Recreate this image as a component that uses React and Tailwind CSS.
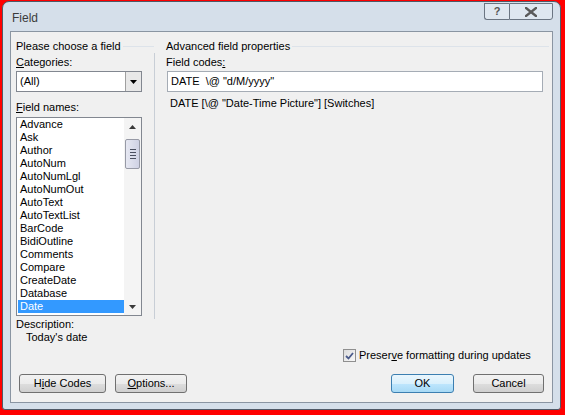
import React from "react";

const items = [
  "Advance", "Ask", "Author", "AutoNum", "AutoNumLgl", "AutoNumOut", "AutoText",
  "AutoTextList", "BarCode", "BidiOutline", "Comments", "Compare", "CreateDate",
  "Database", "Date",
];

function Btn({ children, className = "", primary = false }) {
  return (
    <div
      className={
        "h-[19px] rounded-[3px] border flex items-center justify-center text-[#000] " +
        (primary
          ? "border-[#3c7fb1] bg-[linear-gradient(#eaf6fd_0%,#d9f0fc_50%,#bee6fd_51%,#a7d9f5_100%)] "
          : "border-[#707070] bg-[linear-gradient(#f2f2f2_0%,#ebebeb_50%,#dddddd_51%,#cfcfcf_100%)] ") +
        className
      }
    >
      {children}
    </div>
  );
}

export default function App() {
  return (
    <div className="w-[565px] h-[415px] bg-[#ff0000] pt-px pl-[2px] pr-[4px] pb-[5px] font-['Liberation_Sans',Arial,sans-serif] text-[11px] text-black">
      <div className="h-full rounded-t-[7px] rounded-b-[3px] border border-[#4f5966] bg-[#d5dfea] flex flex-col px-[7px] pb-[6px]">
        {/* title bar */}
        <div className="h-[29px] flex items-start shrink-0">
          <div className="mt-[7px] ml-[2px] text-[12px] text-[#3b3b3b]">Field</div>
          <div className="ml-auto flex mt-px">
            <div className="w-[25px] h-[17px] border border-[#6b7582] border-r-0 rounded-bl-[3px] bg-[#dfe7f0] flex items-center justify-center text-[11px] font-bold text-[#555]">?</div>
            <div className="w-[44px] h-[17px] border border-[#6b7582] rounded-br-[3px] bg-[#dfe7f0] flex items-center justify-center">
              <svg width="12" height="10" viewBox="0 0 12 10">
                <path d="M1 1 L11 9 M11 1 L1 9" stroke="#5a5a5a" strokeWidth="2.4" strokeLinecap="square" />
              </svg>
            </div>
          </div>
        </div>
        {/* body */}
        <div className="flex-1 bg-[#f0f0f0] border border-[#8a95a2] flex flex-col">
          <div className="flex pt-[8px]">
            {/* left column */}
            <div className="w-[127px] ml-[5px] flex flex-col">
              <div className="h-[13px] leading-[13px] whitespace-nowrap flex items-center w-[138px]">
                <span>Please choose a field</span>
                <div className="flex-1 h-px bg-[#dde3ea] ml-[2px]" />
              </div>
              <div className="h-[13px] leading-[13px] mt-[3px]"><span className="underline">C</span>ategories:</div>
              <div className="mt-[2px] h-[21px] w-[126px] border border-[#828790] bg-white flex items-center">
                <span className="ml-[3px] flex-1">(All)</span>
                <div className="w-[16px] h-[19px] border-l border-[#a0a0a0] bg-[#e8e8e8] flex items-center justify-center">
                  <svg width="7" height="4" viewBox="0 0 7 4"><path d="M0 0 H7 L3.5 4 Z" fill="#000" /></svg>
                </div>
              </div>
              <div className="h-[13px] leading-[13px] mt-[9px]"><span className="underline">F</span>ield names:</div>
              <div className="mt-[3px] h-[199px] w-[126px] border border-[#828790] bg-white flex">
                <div className="flex-1 flex flex-col pl-px">
                  {items.map((it) => (
                    <div
                      key={it}
                      className={
                        "h-[13px] leading-[13px] pl-[2px] " +
                        (it === "Date" ? "bg-[#3399ff] text-white" : "")
                      }
                    >
                      {it}
                    </div>
                  ))}
                </div>
                <div className="w-[17px] bg-[#f4f4f4] flex flex-col items-center">
                  <div className="h-[17px] flex items-center justify-center">
                    <svg width="7" height="4" viewBox="0 0 7 4"><path d="M0 4 H7 L3.5 0 Z" fill="#3a3a3a" /></svg>
                  </div>
                  <div className="mt-[4px] w-[15px] h-[30px] rounded-[2px] border border-[#979aa6] bg-[linear-gradient(90deg,#e6e8f2,#cfd2e4)] flex flex-col items-center justify-center gap-[2px]">
                    <div className="w-[6px] h-px bg-[#4a4f60]" />
                    <div className="w-[6px] h-px bg-[#4a4f60]" />
                    <div className="w-[6px] h-px bg-[#4a4f60]" />
                    <div className="w-[6px] h-px bg-[#4a4f60]" />
                  </div>
                  <div className="mt-auto h-[17px] flex items-center justify-center">
                    <svg width="7" height="4" viewBox="0 0 7 4"><path d="M0 0 H7 L3.5 4 Z" fill="#3a3a3a" /></svg>
                  </div>
                </div>
              </div>
              <div className="h-[13px] leading-[13px] mt-[2px]">Description:</div>
              <div className="h-[13px] leading-[13px] pl-[10px]">Today's date</div>
            </div>
            {/* separator */}
            <div className="ml-[11px] mt-[13px] w-px h-[266px] bg-[#c8ced6]" />
            {/* right column */}
            <div className="ml-[11px] w-[377px] flex flex-col">
              <div className="h-[13px] leading-[13px] whitespace-nowrap flex items-center mr-[-6px]">
                <span>Advanced field properties</span>
                <div className="flex-1 h-px bg-[#dde3ea] ml-[2px]" />
              </div>
              <div className="h-[13px] leading-[13px] mt-[3px]">Field codes<span className="underline">:</span></div>
              <div className="mt-[2px] h-[21px] border border-[#a5acb5] bg-white flex items-center pl-[3px] whitespace-pre ml-px">
                {'DATE  \\@ "d/M/yyyy"'}
              </div>
              <div className="mt-[5px] h-[13px] leading-[13px] pl-[4px]">{'DATE [\\@ "Date-Time Picture"] [Switches]'}</div>
            </div>
          </div>
          {/* checkbox */}
          <div className="mt-[5px] pl-[332px] flex items-center h-[13px]">
            <div className="w-[13px] h-[13px] border border-[#8f8f8f] bg-[linear-gradient(135deg,#dcdcdc,#f8f8f8)] flex items-center justify-center">
              <svg width="9" height="8" viewBox="0 0 9 8"><path d="M1 4 L3.5 6.5 L8 1" stroke="#4a5a8a" strokeWidth="1.8" fill="none" /></svg>
            </div>
            <span className="ml-[3px]">Preser<span className="underline">v</span>e formatting during updates</span>
          </div>
          {/* buttons */}
          <div className="mt-[12px] flex pl-[8px] pr-[8px]">
            <Btn className="w-[87px]">H<span className="underline">i</span>de Codes</Btn>
            <Btn className="w-[72px] ml-[9px]"><span className="underline">O</span>ptions...</Btn>
            <Btn primary className="w-[63px] ml-auto">OK</Btn>
            <Btn className="w-[71px] ml-[19px]">Cancel</Btn>
          </div>
        </div>
      </div>
    </div>
  );
}
